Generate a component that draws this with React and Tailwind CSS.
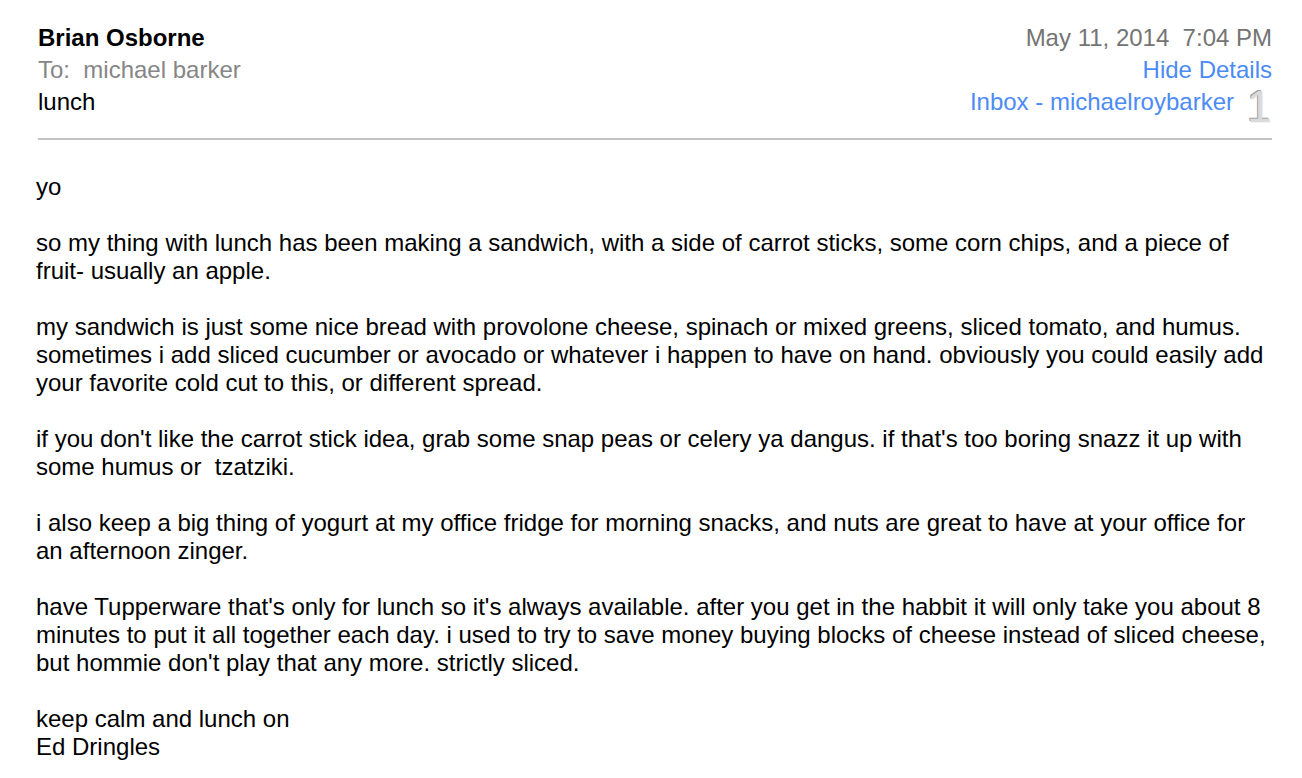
export default function App() {
    const paragraphs = [
        ['yo'],
        [
            'so my thing with lunch has been making a sandwich, with a side of carrot sticks, some corn chips, and a piece of',
            'fruit- usually an apple.',
        ],
        [
            'my sandwich is just some nice bread with provolone cheese, spinach or mixed greens, sliced tomato, and humus.',
            'sometimes i add sliced cucumber or avocado or whatever i happen to have on hand. obviously you could easily add',
            'your favorite cold cut to this, or different spread.',
        ],
        [
            "if you don't like the carrot stick idea, grab some snap peas or celery ya dangus. if that's too boring snazz it up with",
            'some humus or  tzatziki.',
        ],
        [
            'i also keep a big thing of yogurt at my office fridge for morning snacks, and nuts are great to have at your office for',
            'an afternoon zinger.',
        ],
        [
            "have Tupperware that's only for lunch so it's always available. after you get in the habbit it will only take you about 8",
            'minutes to put it all together each day. i used to try to save money buying blocks of cheese instead of sliced cheese,',
            "but hommie don't play that any more. strictly sliced.",
        ],
        ['keep calm and lunch on', 'Ed Dringles'],
    ];

    return (
        <div
            className="min-h-screen bg-white text-black"
            style={{ fontFamily: '"Liberation Sans", Arial, sans-serif' }}
        >
            {/* Message header */}
            <div className="pl-[38px] pr-[30px] pt-[22px]">
                <div className="flex justify-between text-[24px] leading-[32px]">
                    <div>
                        <div className="font-bold">Brian Osborne</div>
                        <div className="whitespace-pre text-[#868686]">To:  michael barker</div>
                        <div>lunch</div>
                    </div>
                    <div className="flex flex-col items-end">
                        <div className="whitespace-pre text-[#747474]">May 11, 2014  7:04 PM</div>
                        <div className="text-[#4c8bf5]">Hide Details</div>
                        <div className="flex items-center">
                            <span className="text-[#4c8bf5]">Inbox - michaelroybarker</span>
                            <span
                                className="ml-[12px] w-[26px] h-[32px] relative text-[44px] leading-none text-[#dadada]"
                                style={{ textShadow: '-1px -1px 0 #a0a0a0, 1px 1px 0 #f2f2f2' }}
                            >
                                <span className="absolute left-[1px] top-[-1px]">1</span>
                            </span>
                        </div>
                    </div>
                </div>
                <div className="mt-[20px] h-[2px] bg-[#c3c3c3]" />
            </div>

            {/* Message body */}
            <div className="pl-[36px] pt-[33px] text-[24px] leading-[28px] whitespace-nowrap">
                {paragraphs.map((lines, i) => (
                    <p key={i} className="mb-[28px] whitespace-pre">
                        {lines.map((line, j) => (
                            <span key={j} className="block">
                                {line}
                            </span>
                        ))}
                    </p>
                ))}
            </div>
        </div>
    );
}
